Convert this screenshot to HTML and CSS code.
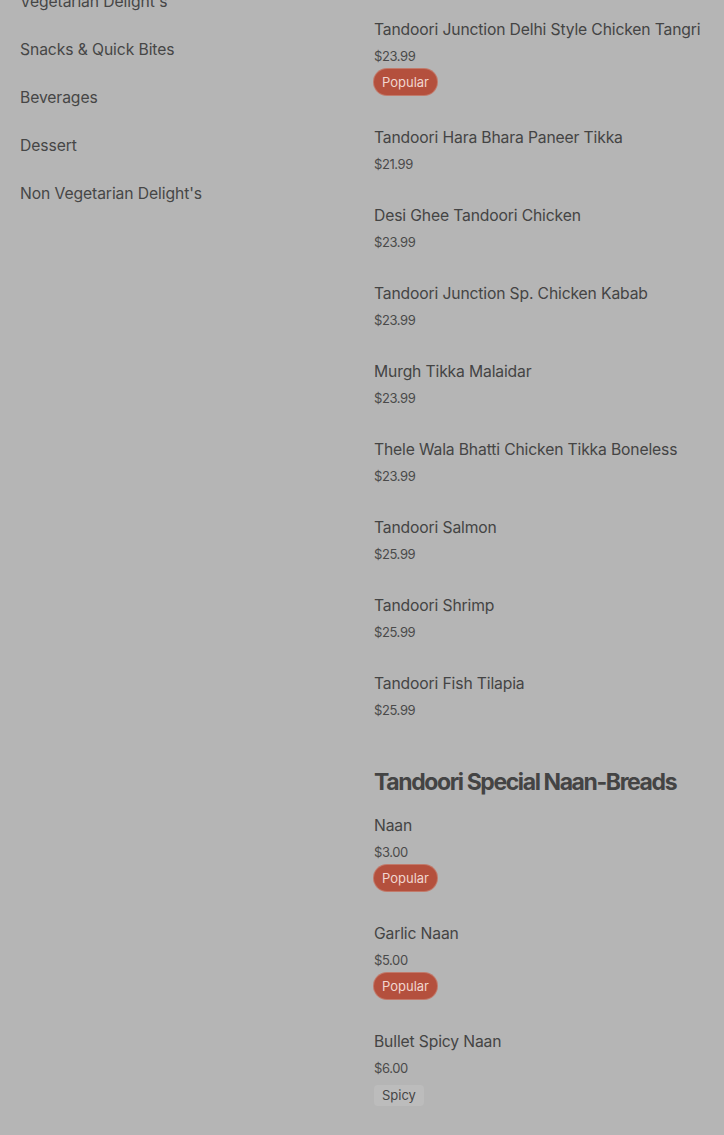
FILE: index.html
```html
<!DOCTYPE html>
<html lang="en">
<head>
<meta charset="utf-8">
<title>Menu</title>
<link rel="stylesheet" href="styles.css">
</head>
<body>
<div class="page">
  <nav class="sidebar">
    <ul class="cats">
      <li>Vegetarian Delight's</li>
      <li>Snacks &amp; Quick Bites</li>
      <li>Beverages</li>
      <li>Dessert</li>
      <li>Non Vegetarian Delight's</li>
    </ul>
  </nav>
  <main class="menu">
    <div class="item">
      <div class="name">Tandoori Junction Delhi Style Chicken Tangri</div>
      <div class="price">$23.99</div>
      <span class="badge popular">Popular</span>
    </div>
    <div class="item">
      <div class="name">Tandoori Hara Bhara Paneer Tikka</div>
      <div class="price">$21.99</div>
    </div>
    <div class="item">
      <div class="name">Desi Ghee Tandoori Chicken</div>
      <div class="price">$23.99</div>
    </div>
    <div class="item">
      <div class="name">Tandoori Junction Sp. Chicken Kabab</div>
      <div class="price">$23.99</div>
    </div>
    <div class="item">
      <div class="name">Murgh Tikka Malaidar</div>
      <div class="price">$23.99</div>
    </div>
    <div class="item">
      <div class="name">Thele Wala Bhatti Chicken Tikka Boneless</div>
      <div class="price">$23.99</div>
    </div>
    <div class="item">
      <div class="name">Tandoori Salmon</div>
      <div class="price">$25.99</div>
    </div>
    <div class="item">
      <div class="name">Tandoori Shrimp</div>
      <div class="price">$25.99</div>
    </div>
    <div class="item">
      <div class="name">Tandoori Fish Tilapia</div>
      <div class="price">$25.99</div>
    </div>

    <h2 class="section-title">Tandoori Special Naan-Breads</h2>
    <div class="item">
      <div class="name">Naan</div>
      <div class="price">$3.00</div>
      <span class="badge popular">Popular</span>
    </div>
    <div class="item">
      <div class="name">Garlic Naan</div>
      <div class="price">$5.00</div>
      <span class="badge popular">Popular</span>
    </div>
    <div class="item">
      <div class="name">Bullet Spicy Naan</div>
      <div class="price">$6.00</div>
      <span class="badge spicy">Spicy</span>
    </div>
  </main>
</div>
</body>
</html>
```

FILE: styles.css
```css
html, body {
  margin: 0;
  padding: 0;
  background: #b5b5b5;
}
body {
  font-family: Inter, "Noto Sans", sans-serif;
  color: #444444;
  overflow: hidden;
  height: 1135px;
}
.page {
  display: flex;
  width: 724px;
}
.sidebar {
  width: 374px;
  flex: none;
  padding-left: 20px;
  box-sizing: border-box;
  margin-top: -22px;
}
.cats {
  list-style: none;
  margin: 0;
  padding: 0;
}
.cats li {
  font-size: 15.7px;
  line-height: 24px;
  padding: 12px 0;
  color: #464646;
  letter-spacing: -0.1px;
}
.menu {
  flex: 1;
  padding-top: 20px;
}
.item {
  display: flex;
  flex-direction: column;
  align-items: flex-start;
  padding-bottom: 32px;
}
.name {
  font-size: 15.7px;
  line-height: 20px;
  color: #444444;
  letter-spacing: -0.15px;
  white-space: nowrap;
}
.price {
  font-size: 13px;
  line-height: 20px;
  margin-top: 6px;
  color: #4a4a4a;
  letter-spacing: -0.4px;
}
.badge {
  font-size: 13px;
  border-radius: 13px;
  box-sizing: border-box;
}
.badge.popular {
  margin-top: 3px;
  margin-bottom: 1px;
  height: 26px;
  line-height: 26px;
  padding: 0 8px;
  background: #b4503d;
  color: #f1d6cf;
  box-shadow: 0 0 0 1px #c17a6b;
}
.badge.spicy {
  margin-top: 7px;
  height: 21px;
  line-height: 21px;
  padding: 0 8px;
  background: #bcbcbc;
  color: #454545;
  border-radius: 4px;
}
.section-title {
  margin: 15px 0 19px 0;
  font-size: 23px;
  line-height: 30px;
  font-weight: 700;
  letter-spacing: -1.4px;
  color: #444444;
}
```
